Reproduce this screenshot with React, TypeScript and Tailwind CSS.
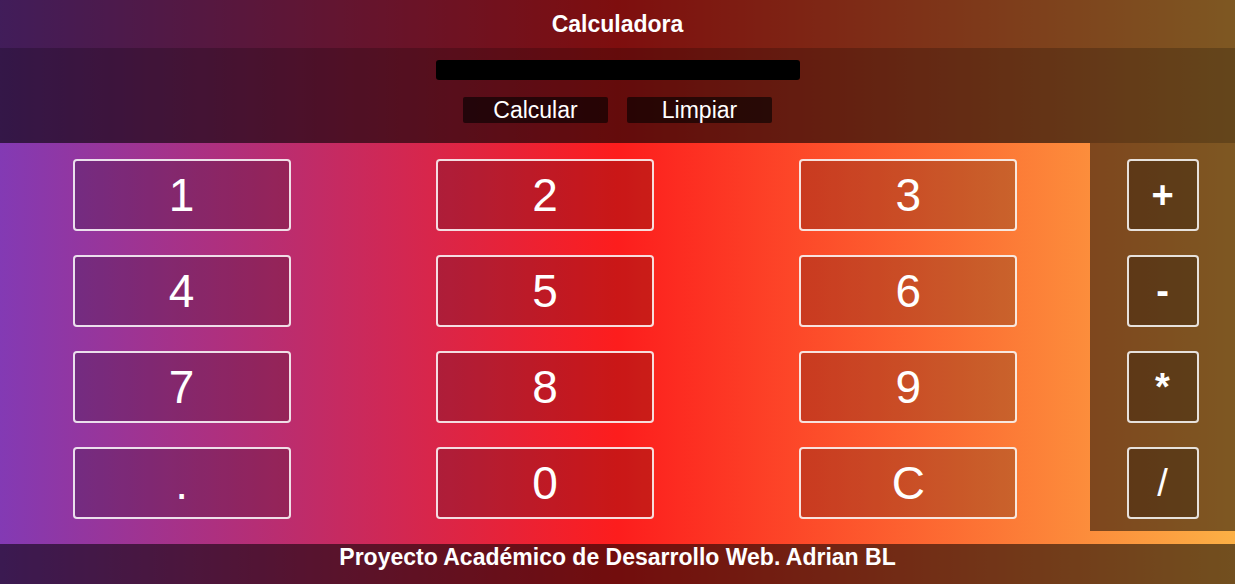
import { useState } from "react";

const KEYS = ["1", "2", "3", "4", "5", "6", "7", "8", "9", ".", "0", "C"];
const OPS = ["+", "-", "*", "/"];

export default function App() {
  const [value, setValue] = useState("");

  const press = (k: string) => {
    if (k === "C") setValue("");
    else setValue((v) => v + k);
  };

  const calc = () => {
    try {
      // eslint-disable-next-line no-new-func
      const r = Function(`"use strict";return (${value})`)();
      setValue(String(r));
    } catch {
      setValue("Error");
    }
  };

  return (
    <div
      className="w-[1235px] h-[584px] flex flex-col bg-[linear-gradient(to_right,#833ab4,#fd1d1d,#fcb045)] text-white overflow-hidden"
      style={{ fontFamily: '"Liberation Sans", Arial, sans-serif' }}
    >
      <header className="bg-black/50">
        <h1 className="h-[48px] flex items-center justify-center text-[23px] font-bold">Calculadora</h1>
        <div className="h-[95px] bg-black/20 flex flex-col items-center pt-[12px]">
          <input
            value={value}
            readOnly
            className="w-[364px] h-[20px] bg-black rounded-[3px] outline-none px-2 text-[16px] text-white"
          />
          <div className="flex gap-[19px] mt-[17px]">
            <button onClick={calc} className="w-[145px] h-[26px] bg-black/60 rounded-[2px] text-[23px] leading-[26px]">
              Calcular
            </button>
            <button onClick={() => setValue("")} className="w-[145px] h-[26px] bg-black/60 rounded-[2px] text-[23px] leading-[26px]">
              Limpiar
            </button>
          </div>
        </div>
      </header>

      <main className="flex flex-1">
        <div className="w-[1090px] grid grid-cols-3 gap-y-[24px] pt-[16px] pb-[25px] content-start">
          {KEYS.map((k) => (
            <div key={k} className="flex justify-center">
              <button
                onClick={() => press(k)}
                className="w-[218px] h-[72px] bg-black/20 border-2 border-white/85 rounded-[4px] text-[46px] leading-none flex items-center justify-center"
              >
                {k}
              </button>
            </div>
          ))}
        </div>
        <div className="w-[145px] self-start bg-black/50 flex flex-col items-center gap-[24px] pt-[16px] pb-[12px]">
          {OPS.map((o) => (
            <button
              key={o}
              onClick={() => press(o)}
              className={
                o === "/"
                  ? "w-[72px] h-[72px] bg-black/25 border-2 border-white/85 rounded-[4px] text-[38px] leading-none flex items-center justify-center"
                  : "w-[72px] h-[72px] bg-black/25 border-2 border-white/85 rounded-[4px] text-[38px] font-bold leading-none flex items-center justify-center"
              }
            >
              {o}
            </button>
          ))}
        </div>
      </main>

      <footer className="h-[40px] bg-black/55 flex items-center justify-center pb-[14px] text-[23px] font-bold">
        Proyecto Académico de Desarrollo Web. Adrian BL
      </footer>
    </div>
  );
}
